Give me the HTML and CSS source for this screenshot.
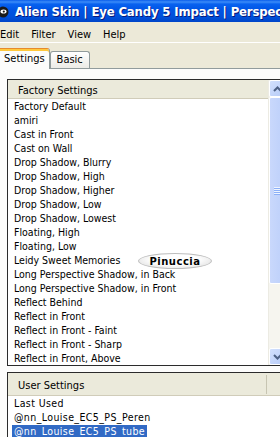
FILE: index.html
```html
<!DOCTYPE html>
<html lang="en">
<head>
  <meta charset="UTF-8" />
  <title>Alien Skin | Eye Candy 5 Impact | Perspective Shadow</title>
  <link rel="stylesheet" href="styles.css">
</head>
<body>
  <div class="window">
    <div class="titlebar">
      <svg class="app-icon" viewBox="0 0 12 12" width="12" height="12">
        <circle cx="6" cy="6" r="5.5" fill="#1a1a1a" />
        <ellipse cx="6.5" cy="5.5" rx="3" ry="2" fill="#fff" />
        <circle cx="6.8" cy="5.6" r="1.1" fill="#1a1a1a" />
      </svg>
      <span class="title">Alien Skin | Eye Candy 5 Impact | Perspective Shadow</span>
    </div>

    <div class="menubar">
      <span>Edit</span>
      <span>Filter</span>
      <span>View</span>
      <span>Help</span>
    </div>

    <div class="tabs">
      <div class="tab active">Settings</div>
      <div class="tab">Basic</div>
    </div>

    <div class="panel">
      <!-- factory presets -->
      <div class="listbox factory">
        <div class="list-main">
          <div class="list-head"><span class="col">Factory Settings</span></div>
          <ul class="items">
            <li><span>Factory Default</span></li>
            <li><span>amiri</span></li>
            <li><span>Cast in Front</span></li>
            <li><span>Cast on Wall</span></li>
            <li><span>Drop Shadow, Blurry</span></li>
            <li><span>Drop Shadow, High</span></li>
            <li><span>Drop Shadow, Higher</span></li>
            <li><span>Drop Shadow, Low</span></li>
            <li><span>Drop Shadow, Lowest</span></li>
            <li><span>Floating, High</span></li>
            <li><span>Floating, Low</span></li>
            <li><span>Leidy Sweet Memories</span></li>
            <li><span>Long Perspective Shadow, in Back</span></li>
            <li><span>Long Perspective Shadow, in Front</span></li>
            <li><span>Reflect Behind</span></li>
            <li><span>Reflect in Front</span></li>
            <li><span>Reflect in Front - Faint</span></li>
            <li><span>Reflect in Front - Sharp</span></li>
            <li><span>Reflect in Front, Above</span></li>
          </ul>
        </div>
        <div class="scrollbar">
          <div class="sb-btn">
            <svg viewBox="0 0 9 6" width="9" height="6"><path d="M1 5 L4.5 1.5 L8 5" fill="none" stroke="#4D6185" stroke-width="2" /></svg>
          </div>
          <div class="sb-track">
            <div class="sb-thumb"><div class="grip"></div></div>
          </div>
          <div class="sb-btn">
            <svg viewBox="0 0 9 6" width="9" height="6"><path d="M1 1 L4.5 4.5 L8 1" fill="none" stroke="#4D6185" stroke-width="2" /></svg>
          </div>
        </div>
      </div>

      <!-- user presets -->
      <div class="listbox user">
        <div class="list-main">
          <div class="list-head"><span class="col">User Settings</span></div>
          <ul class="items">
            <li><span>Last Used</span></li>
            <li><span>@nn_Louise_EC5_PS_Peren</span></li>
            <li class="selected"><span>@nn_Louise_EC5_PS_tube</span></li>
          </ul>
        </div>
      </div>
    </div>

    <div class="watermark">Pinuccia</div>
  </div>
</body>
</html>
```

FILE: styles.css
```css
body {
  margin: 0;
  overflow: hidden;
  background: #ECE9D8;
  color: #000;
  font-family: "DejaVu Sans Condensed", "Liberation Sans", sans-serif;
  font-size: 11px;
}
.window {
  position: relative;
  width: 296px;
}
.titlebar {
  height: 22px;
  display: flex;
  align-items: center;
  background: linear-gradient(#0A5EEB 0, #3B8CF8 2px, #0862F0 4px, #0054E3 10px, #0050DA 17px, #0045C8 22px);
  color: #fff;
  overflow: hidden;
}
.app-icon {
  flex: none;
  margin: 2px 6px 0 -3px;
}
.title {
  font-weight: bold;
  font-size: 13px;
  letter-spacing: -0.15px;
  white-space: nowrap;
  text-shadow: 1px 1px #0A1A7A;
}
.menubar {
  display: flex;
  height: 15px;
  padding-top: 5px;
  line-height: 15px;
  border-bottom: 1px solid #fff;
  white-space: nowrap;
}
.menubar span {
  padding: 0 6px;
}
.menubar span:first-child {
  margin-left: -6px;
}
.tabs {
  display: flex;
  align-items: flex-end;
  height: 25px;
}
.tab {
  position: relative;
  height: 16px;
  line-height: 16px;
  padding: 0 6px;
  border: 1px solid #919B9C;
  border-bottom: none;
  border-radius: 3px 3px 0 0;
  background: linear-gradient(#FFFFFF, #ECEBE6);
}
.tab.active {
  height: 20px;
  line-height: 20px;
  margin-left: -3px;
  margin-bottom: -1px;
  padding-right: 4px;
  border-top-color: #E68B2C;
  box-shadow: inset 0 2px #FFC83C;
  background: #FCFCFB;
  z-index: 1;
}
.panel {
  border-top: 1px solid #919B9C;
  background: #FCFCFB;
  padding: 10px 0 0 7px;
}
.listbox {
  display: flex;
  border: 1px solid #2B2B2B;
  background: #fff;
}
.list-main {
  flex: 1;
}
.factory .list-main {
  flex: none;
  width: 260px;
}
.list-head {
  display: flex;
  align-items: center;
  height: 18px;
  border-bottom: 1px solid #D0CCB9;
  background: #EBEADB;
}
.list-head .col {
  padding: 3px 0 0 10px;
  line-height: 16px;
}
.user {
  margin-top: 6px;
}
.user .list-head {
  height: 22px;
}
.user .list-head .col {
  width: 248px;
  border-right: 1px solid #C7C5B2;
}
.items {
  margin: 0;
  padding: 0;
  list-style: none;
  font-size: 10.5px;
}
.items li {
  height: 14px;
  line-height: 14px;
  padding-left: 4px;
  white-space: nowrap;
}
.items li span {
  padding: 0 2px;
}
.user .items li {
  letter-spacing: 0.4px;
}
.items li.selected span {
  background: #316AC5;
  color: #fff;
}
.scrollbar {
  display: flex;
  flex-direction: column;
  width: 17px;
  background: #F6F5EF;
  border-left: 1px solid #ECEBE3;
}
.sb-btn {
  display: flex;
  align-items: center;
  justify-content: center;
  height: 17px;
  box-sizing: border-box;
  border: 1px solid #fff;
  border-radius: 2px;
  background: linear-gradient(135deg, #D2E0FD, #B6CBF7);
}
.sb-track {
  flex: 1;
}
.sb-thumb {
  display: flex;
  align-items: center;
  justify-content: center;
  height: 187px;
  box-sizing: border-box;
  border: 1px solid #fff;
  border-radius: 2px;
  background: linear-gradient(90deg, #C9D8FC, #BCCFFA);
}
.grip {
  width: 7px;
  height: 8px;
  background: repeating-linear-gradient(#EEF4FE 0 1px, #8CB0F8 1px 2px);
}
.watermark {
  position: absolute;
  left: 138px;
  top: 253px;
  width: 74px;
  height: 16px;
  line-height: 16px;
  box-sizing: border-box;
  border: 1px solid #BDBDBD;
  border-radius: 50%;
  background: radial-gradient(ellipse at 50% 40%, #fff 45%, #D6D6D6 100%);
  font-family: "DejaVu Sans", sans-serif;
  font-weight: bold;
  font-size: 10px;
  letter-spacing: 0.5px;
  text-align: center;
}
```
